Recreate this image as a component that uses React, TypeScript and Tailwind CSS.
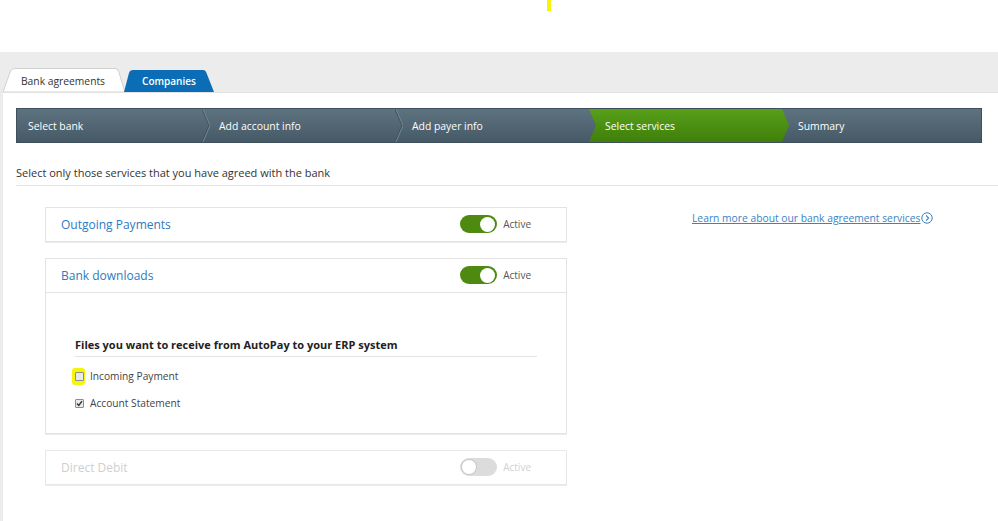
import React from 'react';

const steps = ['Select bank', 'Add account info', 'Add payer info', 'Select services', 'Summary'];

function Toggle({ on, disabled }: { on?: boolean; disabled?: boolean }) {
  return (
    <div className="flex items-center gap-[6px]">
      {on ? (
        <div className="flex h-[18px] w-[37px] items-center justify-end rounded-full bg-[#4f8a10] px-[2px]">
          <div className="h-[15px] w-[15px] rounded-full bg-white" />
        </div>
      ) : (
        <div className="flex h-[18px] w-[37px] items-center justify-start rounded-full bg-[#dcdcdc] px-[1px]">
          <div className="h-[16px] w-[16px] rounded-full border border-[#c8c8c8] bg-white" />
        </div>
      )}
      <span className={`text-[10px] ${disabled ? 'text-[#d0d0d0]' : 'text-[#555]'}`}>Active</span>
    </div>
  );
}

function CardHeader({ title, on, disabled }: { title: string; on?: boolean; disabled?: boolean }) {
  return (
    <div className="flex h-[33px] items-center justify-between pl-[15px] pr-[35px]">
      <span className={`pt-[1px] text-[12px] ${disabled ? 'text-[#cfcfcf]' : 'text-[#2d7bc0]'}`}>{title}</span>
      <Toggle on={on} disabled={disabled} />
    </div>
  );
}

function Check({ checked, highlight }: { checked?: boolean; highlight?: boolean }) {
  return (
    <div className="relative flex h-[9px] w-[9px] items-center justify-center">
      {highlight && (
        <div className="absolute left-[-3px] top-[-4px] h-[17px] w-[13px] rounded-[3px] bg-[#f5f50a]" />
      )}
      <div className="relative flex h-[9px] w-[9px] items-center justify-center rounded-[1px] border border-[#8d8d8d] bg-[#e9e9e9]">
        {checked && (
          <svg width="7" height="7" viewBox="0 0 7 7">
            <path d="M1 3.6 L2.8 5.4 L6 1.2" fill="none" stroke="#333" strokeWidth="1.4" />
          </svg>
        )}
      </div>
    </div>
  );
}

export default function App() {
  return (
    <div className="h-[521px] w-[998px] overflow-hidden bg-white font-['Open_Sans',sans-serif] text-[#333]">
      <div className="h-[52px] pl-[547px]">
        <div className="h-[11px] w-[4px] bg-[#f6f600]" />
      </div>

      <div className="flex h-[40px] items-end bg-[#ececec] pl-[3px]">
        <div className="relative flex h-[24px] w-[122px] items-center justify-center">
          <svg className="absolute inset-0" width="122" height="24" viewBox="0 0 122 24">
            <path d="M0 24 L7.5 3 Q9 0.5 12 0.5 L112 0.5 Q114.5 0.5 115.5 3 L122 24 Z" fill="#fff" stroke="#d0d0d0" />
          </svg>
          <span className="relative pr-[2px] pt-[3px] text-[10.3px] text-[#333]">Bank agreements</span>
        </div>
        <div className="relative -ml-[1px] flex h-[22px] w-[90px] items-center justify-center">
          <svg className="absolute inset-0" width="90" height="22" viewBox="0 0 90 22">
            <path d="M0 22 L5 3 Q6 0 9 0 L79 0 Q81.5 0 82.5 3 L90 22 Z" fill="#0b6db5" />
          </svg>
          <span className="relative pt-[1px] text-[10px] font-semibold text-white">Companies</span>
        </div>
      </div>

      <div className="h-[429px] border-l-[3px] border-t border-[#e2e2e2] border-l-[#ececec] pl-[13px] pr-[16px] pt-[15px]">
        <div className="flex h-[35px] border border-[#3f4f5b] bg-gradient-to-b from-[#5e7380] to-[#465966]">
          {steps.map((s, i) => {
            const active = i === 3;
            const width = i === 0 ? 'w-[186px]' : i === 4 ? 'flex-1' : 'w-[193px]';
            if (active) {
              return (
                <div
                  key={s}
                  className="relative z-10 -mr-[7px] flex w-[200px] items-center bg-gradient-to-b from-[#58a01a] to-[#3f7f0a] pl-[16px] [clip-path:polygon(0_0,calc(100%-7px)_0,100%_50%,calc(100%-7px)_100%,0_100%,7px_50%)]"
                >
                  <span className="pt-[2px] text-[10.4px] text-white">{s}</span>
                </div>
              );
            }
            return (
              <div key={s} className={`relative flex items-center ${width} ${i === 0 ? 'pl-[11px]' : 'pl-[16px]'}`}>
                <span className="pt-[2px] text-[10.4px] text-white">{s}</span>
                {i < 4 && i !== 2 && (
                  <svg className="absolute right-[-7px] top-0" width="8" height="33" viewBox="0 0 8 33">
                    <path d="M0 0 L7 16.5 L0 33" fill="none" stroke="#3f515d" strokeWidth="1" />
                    <path d="M1 0 L8 16.5 L1 33" fill="none" stroke="#73868f" strokeWidth="1" />
                  </svg>
                )}
              </div>
            );
          })}
        </div>

        <p className="-mr-[16px] mt-[22px] border-b border-[#e5e5e5] pb-[3px] text-[11px] text-[#333]">
          Select only those services that you have agreed with the bank
        </p>

        <div className="mt-[21px] flex pl-[29px]">
          <div className="flex w-[522px] flex-col gap-[16px]">
            <div className="border border-[#e3e3e3] shadow-[0_1px_0_#ececec]">
              <CardHeader title="Outgoing Payments" on />
            </div>

            <div className="border border-[#e3e3e3] shadow-[0_1px_0_#ececec]">
              <CardHeader title="Bank downloads" on />
              <div className="border-t border-[#e3e3e3] px-[29px] pb-[22px] pt-[44px]">
                <h3 className="border-b border-[#e3e3e3] pb-[4px] text-[11px] font-bold leading-[15px] text-[#222]">
                  Files you want to receive from AutoPay to your ERP system
                </h3>
                <div className="mt-[13px] flex h-[14px] items-center gap-[6px]">
                  <Check highlight />
                  <span className="text-[10.2px] text-[#444]">Incoming Payment</span>
                </div>
                <div className="mt-[13px] flex h-[14px] items-center gap-[6px]">
                  <Check checked />
                  <span className="text-[10.2px] text-[#444]">Account Statement</span>
                </div>
              </div>
            </div>

            <div className="border border-[#e8e8e8] shadow-[0_1px_0_#ececec]">
              <CardHeader title="Direct Debit" disabled />
            </div>
          </div>

          <div className="ml-[125px] mt-[4px]">
            <a href="#" className="flex items-center gap-[1px] text-[10.3px] text-[#3a82c4] underline">
              Learn more about our bank agreement services
              <svg width="12" height="12" viewBox="0 0 12 12">
                <circle cx="6" cy="6" r="5.2" fill="none" stroke="#3a82c4" strokeWidth="1" />
                <path d="M5 3.4 L7.6 6 L5 8.6" fill="none" stroke="#3a82c4" strokeWidth="1.1" />
              </svg>
            </a>
          </div>
        </div>
      </div>
    </div>
  );
}
